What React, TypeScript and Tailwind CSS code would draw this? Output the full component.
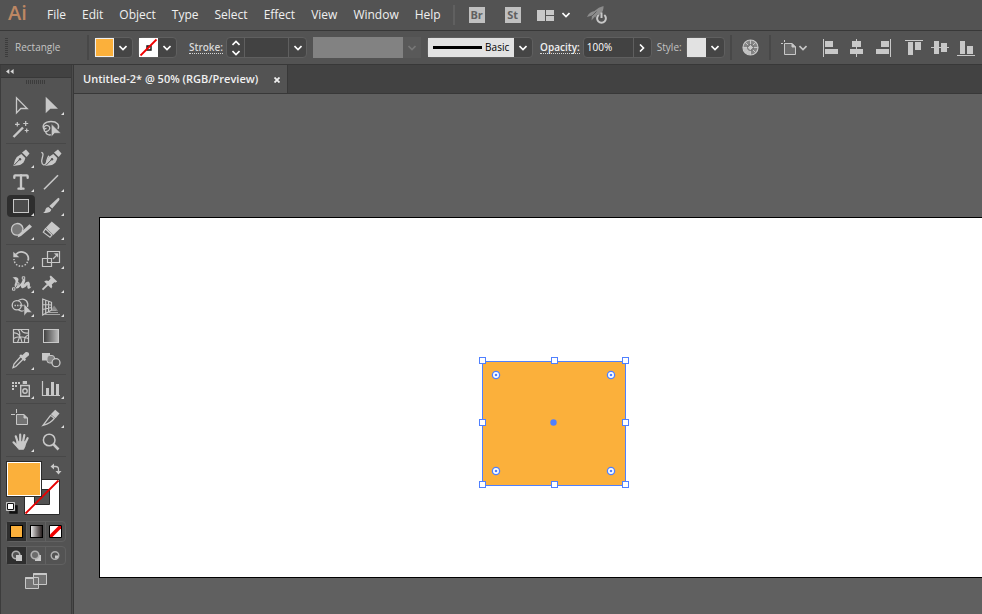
import React from 'react';
import { Type } from 'lucide-react';

const menuItems = ['File', 'Edit', 'Object', 'Type', 'Select', 'Effect', 'View', 'Window', 'Help'];

interface Tool {
  name: string;
  flyout?: boolean;
  selected?: boolean;
  icon: React.ReactNode;
}

const penShape = (
  <>
    <path d="M7.3 20L9 14Q11 10 15.3 8L19.3 12Q18.5 17 14 19Z" fill="#c8c8c8" />
    <path d="M16 6.5L20 3.5L23.5 7.5L20.7 11Z" fill="#c8c8c8" />
    <path d="M8 19.3L13.3 13.8" stroke="#535353" strokeWidth="1" />
    <circle cx="14" cy="13.3" r="1.2" fill="#535353" />
  </>
);

const toolGroups: Tool[][] = [
  [
    { name: 'Selection', icon: <path d="M10.5 4.8V20L14.8 15.5H21.2Z" fill="none" stroke="#c8c8c8" strokeWidth="1.3" /> },
    { name: 'Direct Selection', flyout: true, icon: <path d="M9.7 3.7V20.3L14.3 15.7H22Z" fill="#c8c8c8" /> },
    {
      name: 'Magic Wand',
      icon: (
        <g stroke="#c8c8c8" strokeWidth="1.2" fill="none">
          <path d="M7.5 20L17 10.5" strokeWidth="2.4" />
          <path d="M11.3 5v4.6M9 7.3h4.6M19.7 4v5M17.2 6.5h5M20.7 11.5v4M18.7 13.5h4" />
        </g>
      ),
    },
    {
      name: 'Lasso',
      icon: (
        <g fill="none" stroke="#c8c8c8" strokeWidth="1.3">
          <path d="M8 12.5C5.5 8 9 4.5 15 4.5S24 8 22 12M8 12.5C7 9.5 10 7.5 12.5 9S13.5 14 10.5 14.5 7.5 11.5 10.5 11.3M9.5 15C10.5 18 14 18.5 15.5 17.5" />
          <path d="M15.3 6.8V20L18.7 16.3H25Z" fill="#c8c8c8" stroke="#535353" strokeWidth="0.6" />
        </g>
      ),
    },
  ],
  [
    { name: 'Pen', flyout: true, icon: penShape },
    {
      name: 'Curvature',
      icon: (
        <>
          <g transform="translate(2 0)">{penShape}</g>
          <path d="M5.3 6.3C9 7 5.5 12 5.7 15.5S8.5 20 10 17.5 10.2 12.5 13 9.7" fill="none" stroke="#c8c8c8" strokeWidth="1.3" />
        </>
      ),
    },
    { name: 'Type', flyout: true, icon: <Type x={5} y={2} width={20} height={20} color="#c8c8c8" strokeWidth={2.8} /> },
    { name: 'Line Segment', flyout: true, icon: <path d="M8 19.3L22 5.3" stroke="#c8c8c8" strokeWidth="1.6" /> },
    { name: 'Rectangle', flyout: true, selected: true, icon: <rect x="7.5" y="5.5" width="15" height="13" fill="#4c4c4c" stroke="#c8c8c8" /> },
    {
      name: 'Paintbrush',
      flyout: true,
      icon: (
        <g fill="#c8c8c8">
          <path d="M22.3 3.8Q24.3 4.5 23 6.5L16.2 14.6L13.3 12Z" />
          <path d="M12.4 13L15.3 15.6Q14.5 19.8 7.2 18.7Q9.8 17.5 9.5 15.3Q10 13.4 12.4 13Z" />
        </g>
      ),
    },
    {
      name: 'Shaper',
      flyout: true,
      icon: (
        <>
          <path d="M13 17C8 18 5.5 15 5.5 11.7A5.8 5.8 0 0 1 17 10.3Q17 12 16 13.5" fill="#777777" stroke="#c8c8c8" strokeWidth="1.3" />
          <path d="M23.5 6.3L26 8.7L15 18L11.6 19.6L12.8 16.3Z" fill="#c8c8c8" />
        </>
      ),
    },
    {
      name: 'Eraser',
      flyout: true,
      icon: (
        <>
          <path d="M15.7 3.5L24 10.5L17.3 17L9.8 9.8Z" fill="#c8c8c8" />
          <path d="M9.5 10.8L16 17L14 19.3L7.3 14.2Z" fill="#4f4f4f" stroke="#c8c8c8" strokeWidth="1.2" />
        </>
      ),
    },
  ],
  [
    {
      name: 'Rotate',
      flyout: true,
      icon: (
        <>
          <path d="M10 7.3A7 6.5 0 0 1 22 13.5" fill="none" stroke="#c8c8c8" strokeWidth="1.8" />
          <path d="M21.5 14.8A7 7 0 0 1 8 12" fill="none" stroke="#c8c8c8" strokeWidth="1.5" strokeDasharray="1.5 1.5" />
          <path d="M7.3 4.7V10.3H13.3Z" fill="#c8c8c8" />
        </>
      ),
    },
    {
      name: 'Scale',
      flyout: true,
      icon: (
        <g fill="none" stroke="#c8c8c8" strokeWidth="1.2">
          <path d="M11.5 4.5H23.5V15.5H11.5ZM6.5 11.5H15.5V19.5H6.5Z" />
          <path d="M17 12L21 7.8" />
          <path d="M18.3 6.5H22V10.2Z" fill="#c8c8c8" strokeWidth="0.4" />
        </g>
      ),
    },
    {
      name: 'Width',
      flyout: true,
      icon: (
        <>
          <path d="M6.5 6.5Q11 5 12.5 8Q12.5 11.5 10.8 14Q13 15.5 15.5 11.5L17.5 7Q20 7.5 19 10.5L17.8 13.5Q20 10.5 22.3 10.5Q24.5 11.5 23.8 15.5Q25 16 25.5 15Q24.5 18.5 21.8 17.5Q21 16 21.3 14Q18.5 18 15.8 17Q14.5 16 15 14.5Q11.5 19 9 16.5Q7.8 14.5 9.5 11Q10 8.5 6.5 6.5Z" fill="#c8c8c8" />
          <path d="M8 17.8Q10.5 16.5 11.8 13T17 7" fill="none" stroke="#535353" strokeWidth="0.8" />
          <path d="M16.3 5.8h2.4v2.4h-2.4zM10.8 11.8h2.2V14h-2.2zM6.5 16.8h2.4v2.4H6.5z" fill="#535353" stroke="#c8c8c8" />
        </>
      ),
    },
    {
      name: 'Puppet Warp',
      flyout: true,
      icon: (
        <>
          <path d="M14.8 4.5L21.2 10.5L19.7 11.6L18.3 11.2L15.8 13.4Q17 15.3 15.3 17.5L8.2 10.4Q10.5 8.9 12.5 10L14.5 7.8L13.6 5.8Z" fill="#c8c8c8" />
          <path d="M11.8 13.5L6.5 18.7" stroke="#c8c8c8" strokeWidth="1.8" />
        </>
      ),
    },
    {
      name: 'Shape Builder',
      flyout: true,
      icon: (
        <>
          <circle cx="10.8" cy="10.3" r="4.6" fill="none" stroke="#c8c8c8" strokeWidth="1.3" />
          <path d="M12 5.8Q17 2.5 20.5 6Q22.5 8.5 21.5 12M12.5 14.8Q15 17 18 15.5" fill="none" stroke="#c8c8c8" strokeWidth="1.3" />
          <path d="M8.5 10.5H18" stroke="#c8c8c8" strokeWidth="1.4" strokeDasharray="1.4 1.2" />
          <path d="M18 8.7V21L21 17.5H26Z" fill="#c8c8c8" stroke="#535353" strokeWidth="0.5" />
        </>
      ),
    },
    {
      name: 'Perspective Grid',
      flyout: true,
      icon: (
        <>
          <path d="M16 13.5L18 10.5L20 13L22 16H16Z" fill="#8a8a8a" />
          <g fill="none" stroke="#c8c8c8" strokeWidth="1.2">
            <path d="M6.7 4V20L15.5 15.2V7.3ZM9.7 5.3V18M12.6 6.3V16.5M6.7 9.5L15.5 10M6.7 14.5L15.5 12.5" />
            <path d="M15.5 15.3H20M12 17.5H22M8 19.5H24" stroke="#a5a5a5" strokeWidth="1" />
          </g>
        </>
      ),
    },
  ],
  [
    {
      name: 'Mesh',
      icon: (
        <g fill="none" stroke="#c8c8c8" strokeWidth="1.2">
          <path d="M7.5 5.5H22.5V18.5H7.5Z" />
          <path d="M7.5 9Q14 8 16 18.5M7.5 14.5Q13 11 22.5 14.5M12 5.5Q16 9 11.5 18.5M22.5 9Q17 10 15 5.5M22.5 11Q18 12 18.5 18.5" />
        </g>
      ),
    },
    {
      name: 'Gradient',
      icon: (
        <>
          <linearGradient id="toolGradient">
            <stop offset="0" stopColor="#3e3e3e" />
            <stop offset="1" stopColor="#bdbdbd" />
          </linearGradient>
          <rect x="7.5" y="5.5" width="15" height="13" fill="url(#toolGradient)" stroke="#c8c8c8" />
        </>
      ),
    },
    {
      name: 'Eyedropper',
      flyout: true,
      icon: (
        <>
          <path d="M15 8.3L17.5 10.8L9.8 18.5L7 19.6L8 16Z" fill="none" stroke="#c8c8c8" strokeWidth="1.3" />
          <path d="M13.3 7.8L15 6.3L16.2 7.2L19.8 3.9Q23.7 3.6 23 7.3L19.2 10.5L20 11.8L18.3 13.2Z" fill="#c8c8c8" />
        </>
      ),
    },
    {
      name: 'Blend',
      icon: (
        <>
          <rect x="6" y="5" width="8" height="7.5" fill="#c8c8c8" />
          <rect x="11" y="7.5" width="7.5" height="7.5" rx="2.5" fill="#858585" stroke="#c8c8c8" />
          <circle cx="20" cy="14.7" r="4" fill="#535353" stroke="#c8c8c8" strokeWidth="1.3" />
        </>
      ),
    },
  ],
  [
    {
      name: 'Symbol Sprayer',
      flyout: true,
      icon: (
        <>
          <path d="M6 5h2v2H6zM9 5h2v2H9zM12 5h2v2h-2zM6 8h2v2H6zM9 8h2v2H9zM6 11h2v2H6zM16.7 4H21v3h-4.3z" fill="#c8c8c8" />
          <path d="M14.7 8.5H23.3V19.3H14.7Z" fill="none" stroke="#c8c8c8" strokeWidth="1.4" />
          <circle cx="19" cy="14" r="2.2" fill="none" stroke="#c8c8c8" strokeWidth="1.4" />
        </>
      ),
    },
    {
      name: 'Column Graph',
      flyout: true,
      icon: (
        <>
          <path d="M6.5 4V18.5H24" fill="none" stroke="#c8c8c8" strokeWidth="1.2" />
          <path d="M10 11h3v7h-3zM15 5h3v13h-3zM20 7h3v11h-3z" fill="#c8c8c8" />
        </>
      ),
    },
  ],
  [
    {
      name: 'Artboard',
      icon: (
        <>
          <path d="M10.5 3V7M5 8.5H9" stroke="#c8c8c8" strokeWidth="1" />
          <path d="M10.5 8.5H18L21.5 12V18.5H10.5Z" fill="#737373" stroke="#c8c8c8" />
          <path d="M18 8.5V12H21.5" fill="#c8c8c8" stroke="#c8c8c8" />
        </>
      ),
    },
    {
      name: 'Slice',
      flyout: true,
      icon: (
        <>
          <path d="M7 19.3L14.5 9.3L18.3 12.3Q15 17 7 19.3Z" fill="none" stroke="#c8c8c8" strokeWidth="1.3" />
          <path d="M14.8 8.2L19.2 3.8L23.5 7.5L19.5 12.2Z" fill="#c8c8c8" />
        </>
      ),
    },
    {
      name: 'Hand',
      flyout: true,
      icon: (
        <g stroke="#c8c8c8" strokeLinecap="round" fill="none">
          <path d="M12 13L9.8 6.3M14.2 12V4.7M17 12L18.3 5.2M18.8 14L21.6 8.2M12 17L7.5 12.3" strokeWidth="2.2" />
          <path d="M11 11.5H19.5Q20 16.5 17.5 19.5H12.8L10 15.5Z" fill="#c8c8c8" strokeWidth="0.6" />
        </g>
      ),
    },
    {
      name: 'Zoom',
      icon: (
        <g fill="none" stroke="#c8c8c8">
          <circle cx="13.2" cy="10" r="5.8" strokeWidth="1.5" />
          <path d="M17.3 14.2L22.5 19.5" strokeWidth="2.6" />
        </g>
      ),
    },
  ],
];

const Chevron = ({ className = 'text-white' }: { className?: string }) => (
  <svg className={className} width="8" height="6" viewBox="0 0 8 6" fill="none" stroke="currentColor" strokeWidth="1.6">
    <path d="M0.5 1L4 4.5L7.5 1" />
  </svg>
);

const Divider = () => <span className="h-[25px] w-0.5 shrink-0 bg-[#484848]" />;

const MenuBar = () => (
  <header className="flex h-[31px] shrink-0 items-center border-b border-[#383838]">
    <span className="w-[39px] shrink-0 pb-1 pl-2 text-xl leading-6 font-semibold text-[#bd8763]">Ai</span>
    <nav className="flex text-xs">
      {menuItems.map((item) => (
        <button key={item} className="px-2 text-[#f0f0f0]">
          {item}
        </button>
      ))}
    </nav>
    <span className="ml-1 h-5 w-0.5 shrink-0 bg-[#606060]" />
    <div className="ml-[14px] flex items-center">
      <button className="mr-5 size-4 bg-[#c0c0c0] text-[11px] leading-4 font-bold text-[#606060]">Br</button>
      <button className="mr-4 size-4 bg-[#c0c0c0] text-[11px] leading-4 font-bold text-[#606060]">St</button>
      <button aria-label="Arrange documents" className="mr-4 flex items-center gap-2">
        <svg width="17" height="11" fill="#c8c8c8">
          <path d="M0 0h8v11H0zM9 0h8v5H9zM9 6h8v5H9z" />
        </svg>
        <Chevron />
      </button>
      <button aria-label="GPU performance">
        <svg width="22" height="18" viewBox="0 0 22 18" fill="none">
          <path d="M17.5 0Q18 5 14 8.5L10.5 13L9 10.5L5.5 14.5L6 9.5L1 11Q3 6 8.5 5Q12.5 1 17.5 0Z" fill="#8c8c8c" />
          <path d="M6 10L10.5 5.5" stroke="#535353" strokeWidth="0.8" />
          <path d="M12.5 9.5A4.8 4.8 0 1 0 18.5 9.5" stroke="#535353" strokeWidth="3" />
          <path d="M12.7 9A4.4 4.4 0 1 0 18.3 9M15.5 6.5V12" stroke="#c8c8c8" strokeWidth="2" />
        </svg>
      </button>
    </div>
  </header>
);

const alignIcons = [
  { name: 'Align left', width: 15, gap: 'mr-3', d: 'M0 0h1v18H0zM2 2h8v6H2zM2 10h13v5H2z' },
  { name: 'Align centre', width: 13, gap: 'mr-[13px]', d: 'M6 0h1v18H6zM2 2h9v6H2zM0 10h13v5H0z' },
  { name: 'Align right', width: 15, gap: 'mr-[14px]', d: 'M14 0h1v18h-1zM5 2h8v6H5zM0 10h13v5H0z' },
  { name: 'Align top', width: 18, gap: 'mr-2', d: 'M0 1h18v1H0zM3 3h5v13H3zM10 3h6v8h-6z' },
  { name: 'Align middle', width: 18, gap: 'mr-2', d: 'M0 8h18v1H0zM3 2h5v13H3zM10 4h6v9h-6z' },
  { name: 'Align bottom', width: 18, gap: '', d: 'M0 16h18v1H0zM3 2h5v13H3zM10 7h6v8h-6z' },
];

const ControlBar = () => (
  <div className="flex h-[34px] shrink-0 items-center overflow-hidden border-b border-[#383838] pl-[5px] text-[10px] text-[#d8d8d8]">
    <span className="h-5 w-[3px] shrink-0 bg-[repeating-linear-gradient(#3c3c3c_0_1px,#535353_1px_2px)]" />
    <span className="w-[79px] shrink-0 pl-[7px] font-medium text-[#c4c4c4]">Rectangle</span>
    <Divider />
    <button aria-label="Fill" className="ml-[5px] flex h-[21px] shrink-0 items-center rounded-sm border border-[#5f5f5f] bg-[#454545]">
      <span className="size-[19px] border border-[#eeeeee] bg-[#fbb03b]" />
      <span className="flex w-[18px] justify-center"><Chevron /></span>
    </button>
    <button aria-label="Stroke colour" className="ml-[5px] flex h-[21px] shrink-0 items-center rounded-sm border border-[#5f5f5f] bg-[#454545]">
      <svg width="19" height="19">
        <path d="M0 0h19v19H0z" fill="#ffffff" />
        <path d="M8 8h4v4H8z" fill="#ffffff" stroke="#111111" strokeWidth="1.4" />
        <path d="M1.5 17.5L17.5 1.5" stroke="#f00000" strokeWidth="1.8" />
      </svg>
      <span className="flex w-[18px] justify-center"><Chevron /></span>
    </button>
    <label htmlFor="stroke" className="ml-3 shrink-0 border-b border-dotted border-[#d8d8d8] leading-3 font-semibold">Stroke:</label>
    <div className="ml-[3px] flex h-[21px] w-[81px] shrink-0 items-stretch rounded-sm border border-[#5f5f5f] bg-[#454545]">
      <div className="flex w-[18px] flex-col items-center justify-center gap-1 border-r border-[#5f5f5f]">
        <button aria-label="Increase stroke" className="rotate-180"><Chevron /></button>
        <button aria-label="Decrease stroke"><Chevron /></button>
      </div>
      <input id="stroke" className="w-0 min-w-0 grow bg-[#424242] px-1 outline-none" />
      <button aria-label="Stroke weights" className="flex w-[18px] items-center justify-center border-l border-[#5f5f5f]"><Chevron /></button>
    </div>
    <button aria-label="Width profile" disabled className="ml-[6px] flex h-[21px] shrink-0 items-center bg-[#595959]">
      <span className="h-full w-[90px] bg-[#828282]" />
      <span className="flex w-[18px] justify-center"><Chevron className="text-[#777777]" /></span>
    </button>
    <button aria-label="Brush definition" className="ml-[6px] flex h-[21px] shrink-0 items-center rounded-sm border border-[#5f5f5f] bg-[#454545]">
      <span className="flex h-full w-[86px] items-center gap-[3px] bg-[#e2e2e2] pl-[5px] text-black">
        <span className="h-[3px] w-[49px] bg-black" />
        Basic
      </span>
      <span className="flex w-[18px] justify-center"><Chevron /></span>
    </button>
    <label htmlFor="opacity" className="ml-[7px] shrink-0 border-b border-dotted border-[#d8d8d8] leading-3 font-semibold text-[#f0f0f0]">Opacity:</label>
    <div className="ml-[3px] flex h-[21px] w-[69px] shrink-0 items-stretch rounded-sm border border-[#5f5f5f] bg-[#424242]">
      <input id="opacity" defaultValue="100%" className="w-0 min-w-0 grow px-[3px] text-white outline-none" />
      <button aria-label="Opacity slider" className="flex w-[18px] items-center justify-center border-l border-[#5f5f5f]">
        <span className="-rotate-90"><Chevron /></span>
      </button>
    </div>
    <label htmlFor="style" className="ml-[5px] shrink-0 font-medium text-[#c4c4c4]">Style:</label>
    <button id="style" className="mr-[5px] ml-1 flex h-[21px] shrink-0 items-center rounded-sm border border-[#5f5f5f] bg-[#454545]">
      <span className="size-[19px] bg-[#e2e2e2]" />
      <span className="flex w-[18px] justify-center"><Chevron /></span>
    </button>
    <Divider />
    <button aria-label="Recolor artwork" className="mx-[10px] shrink-0">
      <svg width="17" height="17" viewBox="0 0 17 17">
        <circle cx="8.5" cy="8.5" r="7.5" fill="#858585" stroke="#c8c8c8" strokeWidth="1.2" />
        <path d="M8.5 8.5L1 8.5A7.5 7.5 0 0 0 8.5 16Z" fill="#c0c0c0" />
        <path d="M8.5 1V16M1 8.5H16M3.2 3.2L13.8 13.8M13.8 3.2L3.2 13.8" stroke="#c8c8c8" />
        <circle cx="8.5" cy="8.5" r="3" fill="none" stroke="#6b6b6b" />
        <circle cx="8.5" cy="8.5" r="1.8" fill="#c8c8c8" />
      </svg>
    </button>
    <Divider />
    <button aria-label="Align to" className="mr-4 ml-[10px] flex shrink-0 items-center gap-0.5">
      <svg width="16" height="17" viewBox="0 0 16 17" fill="none" stroke="#c8c8c8">
        <path d="M3.5 1V3M0 4.5H2" />
        <path d="M3.5 4.5H11L14.5 8V15.5H3.5Z" fill="#6b6b6b" />
        <path d="M11 4.5V8H14.5Z" fill="#c8c8c8" />
      </svg>
      <Chevron className="text-[#c8c8c8]" />
    </button>
    {alignIcons.map((icon) => (
      <button key={icon.name} aria-label={icon.name} className={`shrink-0 ${icon.gap}`}>
        <svg width={icon.width} height="18" fill="#c8c8c8">
          <path d={icon.d} />
        </svg>
      </button>
    ))}
  </div>
);

const FillStroke = () => (
  <div className="relative mt-1 h-[54px]">
    <button aria-label="Stroke" className="absolute top-[18px] left-[18px]">
      <svg width="36" height="36">
        <path d="M0.5 0.5h35v35h-35z" fill="#ffffff" stroke="#2b2b2b" />
        <path d="M10.5 10.5h15v15h-15z" fill="#535353" stroke="#2b2b2b" />
        <path d="M1.5 34.5L34.5 1.5" stroke="#e60000" strokeWidth="1.8" />
      </svg>
    </button>
    <button aria-label="Fill colour" className="absolute top-0 left-0 size-9 border border-[#2b2b2b] bg-white p-px">
      <span className="block size-full bg-[#fbb03b]" />
    </button>
    <button aria-label="Swap fill and stroke" className="absolute top-0.5 left-11">
      <svg width="12" height="12" fill="none" stroke="#c8c8c8" strokeWidth="1.3">
        <path d="M3 3.5H5.5Q8.5 3.5 8.5 6.5V9" />
        <path d="M0.5 3.5L4 0.5V6.5ZM5.5 8H11.5L8.5 11.5Z" fill="#c8c8c8" stroke="none" />
      </svg>
    </button>
    <button aria-label="Default fill and stroke" className="absolute top-[41px] left-0">
      <svg width="12" height="12">
        <path d="M4.5 4.5h6v6h-6z" fill="#535353" stroke="#111111" strokeWidth="2.4" />
        <path d="M0.5 0.5h8v8h-8z" fill="#ffffff" stroke="#c8c8c8" />
        <path d="M1.5 1.5h6v6h-6z" fill="#ffffff" stroke="#111111" />
      </svg>
    </button>
  </div>
);

const Toolbox = () => (
  <aside className="flex w-[74px] shrink-0 border-r border-[#383838]">
    <div className="w-[72px] border-x border-[#3c3c3c]">
      <div className="flex h-[13px] items-center border-b border-[#383838] bg-[#424242] pl-[5px]">
        <button aria-label="Collapse toolbar">
          <svg width="8" height="5" fill="#d8d8d8">
            <path d="M3.3 0V5L0 2.5ZM7.6 0V5L4.3 2.5Z" />
          </svg>
        </button>
      </div>
      <div className="mx-auto mt-0.5 h-1 w-5 bg-[repeating-linear-gradient(90deg,#3c3c3c_0_1px,#535353_1px_2px)]" />
      <div className="mt-[9px] pl-[5px]">
        {toolGroups.map((tools) => (
          <div key={tools[0].name} className="mb-0.5 grid w-[60px] grid-cols-2 border-b border-[#484848] pb-0.5">
            {tools.map((tool) => (
              <button key={tool.name} aria-label={tool.name} className={`m-px h-[22px] w-7 rounded-sm ${tool.selected ? 'bg-[#2e2e2e]' : ''}`}>
                <svg width="28" height="22" viewBox="1 1 28 22">
                  {tool.icon}
                  {tool.flyout && <path d="M28 19V22H25Z" fill="#e0e0e0" />}
                </svg>
              </button>
            ))}
          </div>
        ))}
        <FillStroke />
        <div className="mt-[6px] flex h-[21px] w-[60px] rounded-sm border border-[#616161]">
          <button aria-label="Color" className="flex w-5 items-center justify-center bg-[#2e2e2e]">
            <span className="size-[13px] border border-black bg-[#fbb03b]" />
          </button>
          <button aria-label="Gradient fill" className="flex w-5 items-center justify-center border-x border-[#616161]">
            <span className="size-[13px] shrink-0 border border-black bg-linear-to-r from-[#e8e8e8] to-[#2b2323]" />
          </button>
          <button aria-label="None" className="flex w-5 items-center justify-center">
            <svg width="13" height="13">
              <path d="M0.5 0.5h12v12h-12z" fill="#ffffff" stroke="#000000" />
              <path d="M1 9.5V12H3.5L12 3.5V1H9.5Z" fill="#f00000" />
            </svg>
          </button>
        </div>
        <div className="mt-1 flex h-[19px] w-[60px] rounded-sm border border-[#616161]">
          <button aria-label="Draw normal" className="flex w-5 items-center justify-center bg-[#2e2e2e]">
            <svg width="12" height="12">
              <circle cx="5" cy="5" r="3.8" fill="#535353" stroke="#b0b0b0" strokeWidth="1.6" />
              <path d="M5 5h6v6H5z" fill="#c8c8c8" />
            </svg>
          </button>
          <button aria-label="Draw behind" className="flex w-5 items-center justify-center border-x border-[#616161]">
            <svg width="12" height="12" className="shrink-0">
              <path d="M5 5h6v6H5z" fill="#c8c8c8" />
              <circle cx="5" cy="5" r="3.8" fill="#6b6b6b" stroke="#b0b0b0" strokeWidth="1.6" />
            </svg>
          </button>
          <button aria-label="Draw inside" className="flex w-5 items-center justify-center">
            <svg width="12" height="12">
              <circle cx="6" cy="5.5" r="3.8" fill="#535353" stroke="#b0b0b0" strokeWidth="1.4" />
              <path d="M6 5.5h3v2L8 8.5H6z" fill="#c8c8c8" />
            </svg>
          </button>
        </div>
        <button aria-label="Screen mode" className="mt-2 ml-[19px] block">
          <svg width="22" height="16" fill="#737373" stroke="#c8c8c8">
            <path d="M0.5 4.5h13v11h-13zM8.5 0.5h13v11h-13z" />
            <path d="M0.5 5h8M8.5 1h13" strokeWidth="2" />
          </svg>
        </button>
      </div>
    </div>
    <div className="w-px bg-[#4b4b4b]" />
  </aside>
);

const handles = [
  [3, 4], [75, 4], [146, 4],
  [3, 66], [146, 66],
  [3, 128], [75, 128], [146, 128],
];
const corners = [[17, 18], [132, 18], [17, 114], [132, 114]];

const Canvas = () => (
  <main className="grow bg-[#606060] pt-[123px] pl-[25px]">
    <div className="relative h-[361px] border border-r-0 border-black bg-white">
      <svg className="absolute top-[139px] left-[379px]" width="151" height="132">
        <path d="M3.5 4.5h143v124h-143z" fill="#fbb03b" stroke="#4f80ff" />
        {handles.map(([x, y]) => (
          <rect key={`${x}-${y}`} x={x - 2.5} y={y - 3.5} width="6" height="6" fill="#ffffff" stroke="#4f80ff" />
        ))}
        {corners.map(([x, y]) => (
          <g key={`${x}-${y}`}>
            <circle cx={x} cy={y} r="3.6" fill="#ffffff" stroke="#4f80ff" strokeWidth="1.3" />
            <circle cx={x} cy={y} r="1.3" fill="#4f80ff" />
          </g>
        ))}
        <circle cx="74.5" cy="65.5" r="3.2" fill="#4f80ff" />
      </svg>
    </div>
  </main>
);

export default function App() {
  return (
    <div className="flex min-h-screen flex-col overflow-hidden bg-[#535353] font-['Open_Sans',sans-serif]">
      <MenuBar />
      <ControlBar />
      <div className="flex grow">
        <Toolbox />
        <div className="flex min-w-0 grow flex-col">
          <div className="flex h-[29px] shrink-0 border-b border-[#383838] bg-[#424242]">
            <div className="flex items-center border-r border-[#383838] bg-[#535353] pt-px pr-[7px] pl-[9px] text-[11px] font-semibold text-[#f0f0f0]">
              Untitled-2* @ 50% (RGB/Preview)
              <button aria-label="Close tab" className="ml-4">
                <svg width="6" height="6" stroke="#f0f0f0" strokeWidth="1.8">
                  <path d="M0.5 0.5L5.5 5.5M5.5 0.5L0.5 5.5" />
                </svg>
              </button>
            </div>
          </div>
          <Canvas />
        </div>
      </div>
    </div>
  );
}
